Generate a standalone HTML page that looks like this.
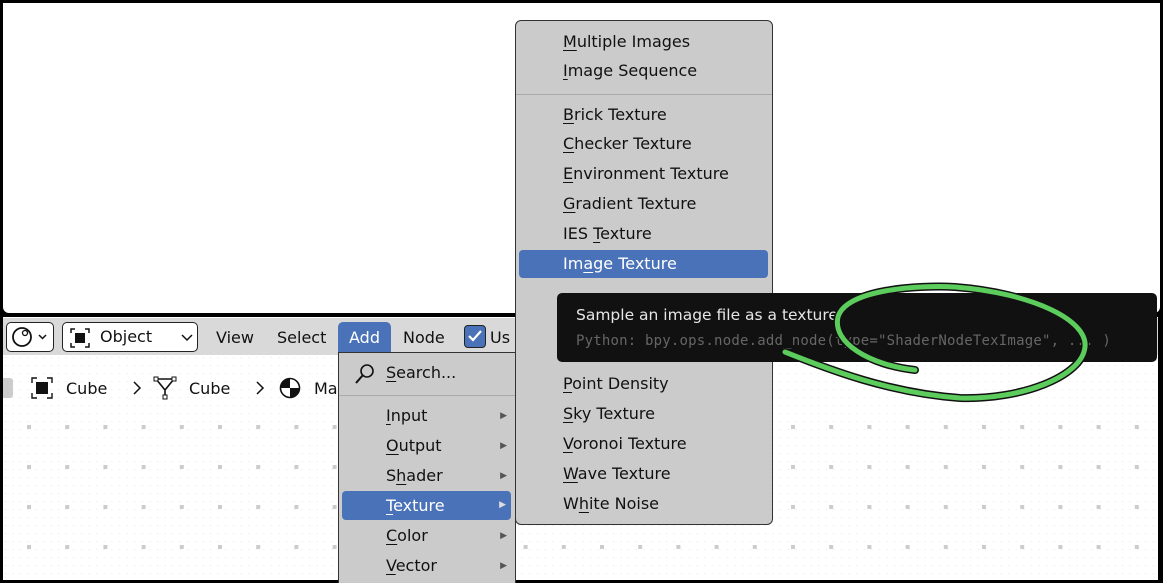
<!DOCTYPE html><html><head><style>
*{margin:0;padding:0;box-sizing:border-box}
html,body{width:1163px;height:583px;overflow:hidden}
body{background:#000;position:relative;font-family:"DejaVu Sans","Liberation Sans",sans-serif;font-size:16px;color:#111}
.abs{position:absolute}
#top{left:3px;top:3px;width:1157px;height:310px;background:#fff;border-radius:0 0 6px 6px}
#bot{left:3px;top:317px;width:1155px;height:263px;background:#fff}
#hdr{left:3px;top:318px;width:1155px;height:37px;background:#d9d9d9}
.btn{border:1.5px solid #222;border-radius:5px;background:#fff;height:30px;top:322px}
.menu{background:#cbcbcb;border:1px solid #333;border-radius:6px;overflow:hidden}
.it{position:absolute;left:0;width:100%;height:30px;line-height:30px}
.hl{background:#4a72b8;color:#fff;border-radius:4px}
.u{text-decoration:underline;text-decoration-thickness:1px;text-underline-offset:3px}
.arr{position:absolute;right:8px;font-size:9px;color:#555}
</style></head><body>
<div id="top" class="abs"></div>
<div id="bot" class="abs"></div>
<svg class="abs" style="left:3px;top:355px" width="1155" height="225">
<defs><pattern id="p" x="24" y="-1" width="38.2" height="40" patternUnits="userSpaceOnUse"><rect x="0" y="71" width="4" height="4" fill="#ccc"/><rect x="0" y="31" width="4" height="4" fill="#ccc"/></pattern>
<pattern id="q" width="7.6" height="8" patternUnits="userSpaceOnUse"><rect x="2" y="2" width="1" height="1" fill="#e6e6e6"/></pattern></defs>
<rect width="1155" height="225" fill="url(#q)"/>
<rect y="40" width="1155" height="185" fill="url(#p)"/>
</svg>
<div id="hdr" class="abs"></div>
<div class="abs btn" style="left:6px;width:48px"><svg width="46" height="28"><circle cx="15" cy="14" r="9" fill="none" stroke="#111" stroke-width="1.8"/><circle cx="18" cy="10" r="2.5" fill="none" stroke="#111" stroke-width="1.3"/><path d="M32 12l3.5 3.5 3.5-3.5" fill="none" stroke="#111" stroke-width="1.5"/></svg></div>
<div class="abs btn" style="left:62px;width:136px"><svg class="abs" style="left:7px;top:5px" width="20" height="20"><path d="M1 5V1h4M15 1h4v4M19 15v4h-4M5 19H1v-4" fill="none" stroke="#111" stroke-width="1.5"/><rect x="5" y="5" width="10" height="10" fill="#111"/></svg><span class="abs" style="left:37px;top:4px">Object</span><svg class="abs" style="left:118px;top:10px" width="12" height="10"><path d="M1 2l5 5 5-5" fill="none" stroke="#111" stroke-width="1.5"/></svg></div>
<span class="abs" style="left:216px;top:328px">View</span>
<span class="abs" style="left:277px;top:328px">Select</span>
<div class="abs hl" style="left:338px;top:322px;width:53px;height:32px;border-radius:5px 5px 0 0;color:#fff;padding:6px 0 0 11px">Add</div>
<span class="abs" style="left:403px;top:328px">Node</span>
<div class="abs" style="left:464px;top:325px;width:22px;height:23px;background:#4a72b8;border:1.5px solid #222;border-radius:4px"><svg width="20" height="20"><path d="M4 10l4 4 8-9" fill="none" stroke="#fff" stroke-width="2.2"/></svg></div>
<span class="abs" style="left:490px;top:328px">Us</span>
<div class="abs" style="left:3px;top:378px;width:10px;height:20px;background:#ccc;border-radius:0 3px 3px 0"></div>
<svg class="abs" style="left:31px;top:377px" width="22" height="22"><path d="M1 6V1h5M16 1h5v5M21 16v5h-5M6 21H1v-5" fill="none" stroke="#111" stroke-width="1.4"/><rect x="5" y="5" width="12" height="12" fill="#111"/></svg>
<span class="abs" style="left:66px;top:379px">Cube</span>
<svg class="abs" style="left:132px;top:381px" width="10" height="14"><path d="M2 1l6 6-6 6" fill="none" stroke="#111" stroke-width="1.5"/></svg>
<svg class="abs" style="left:153px;top:376px" width="24" height="24"><path d="M3 3h18L12 14v8M3 3l9 11M21 3l-9 11" fill="none" stroke="#111" stroke-width="1.6"/><rect x="1" y="1" width="4" height="4" fill="#fff" stroke="#111"/><rect x="19" y="1" width="4" height="4" fill="#fff" stroke="#111"/><rect x="10" y="19" width="4" height="4" fill="#fff" stroke="#111"/></svg>
<span class="abs" style="left:189px;top:379px">Cube</span>
<svg class="abs" style="left:255px;top:381px" width="10" height="14"><path d="M2 1l6 6-6 6" fill="none" stroke="#111" stroke-width="1.5"/></svg>
<svg class="abs" style="left:279px;top:377px" width="22" height="22"><circle cx="11" cy="11" r="9.5" fill="#fff" stroke="#111" stroke-width="1.6"/><path d="M11 1.5A9.5 9.5 0 0 0 1.5 11H11z M11 11h9.5A9.5 9.5 0 0 1 11 20.5z" fill="#111"/></svg>
<span class="abs" style="left:314px;top:379px">Ma</span>

<div class="abs menu" style="left:338px;top:352px;width:178px;height:231px;border-radius:0;border-bottom:none">
<svg class="abs" style="left:15px;top:10px" width="22" height="22"><circle cx="13" cy="8" r="6" fill="none" stroke="#111" stroke-width="1.6"/><path d="M9 12L2 20" stroke="#111" stroke-width="2"/></svg>
<div class="it" style="top:5px;padding-left:47px"><span class="u">S</span>earch...</div>
<div class="abs" style="left:0;top:42px;width:176px;height:1px;background:#aaa"></div>
<div class="it" style="top:48px;padding-left:47px"><span class="u">I</span>nput<span class="arr">▶</span></div>
<div class="it" style="top:78px;padding-left:47px"><span class="u">O</span>utput<span class="arr">▶</span></div>
<div class="it" style="top:108px;padding-left:47px">S<span class="u">h</span>ader<span class="arr">▶</span></div>
<div class="it hl" style="top:138px;left:3px;width:169px;height:29px;padding-left:44px;line-height:29px"><span class="u">T</span>exture<span class="arr" style="right:5px;color:#ddd">▶</span></div>
<div class="it" style="top:168px;padding-left:47px"><span class="u">C</span>olor<span class="arr">▶</span></div>
<div class="it" style="top:198px;padding-left:47px"><span class="u">V</span>ector<span class="arr">▶</span></div>
</div>

<div class="abs menu" style="left:515px;top:20px;width:258px;height:505px">
<div class="it" style="top:6px;padding-left:47px"><span class="u">M</span>ultiple Images</div>
<div class="it" style="top:35px;padding-left:47px"><span class="u">I</span>mage Sequence</div>
<div class="abs" style="left:0;top:73px;width:256px;height:1px;background:#aaa"></div>
<div class="it" style="top:79px;padding-left:47px"><span class="u">B</span>rick Texture</div>
<div class="it" style="top:108px;padding-left:47px"><span class="u">C</span>hecker Texture</div>
<div class="it" style="top:138px;padding-left:47px"><span class="u">E</span>nvironment Texture</div>
<div class="it" style="top:168px;padding-left:47px"><span class="u">G</span>radient Texture</div>
<div class="it" style="top:198px;padding-left:47px">IES <span class="u">T</span>exture</div>
<div class="it hl" style="top:229px;left:3px;width:249px;height:28px;line-height:28px;padding-left:44px">Im<span class="u">a</span>ge Texture</div>
<div class="it" style="top:348px;padding-left:47px"><span class="u">P</span>oint Density</div>
<div class="it" style="top:378px;padding-left:47px"><span class="u">S</span>ky Texture</div>
<div class="it" style="top:408px;padding-left:47px"><span class="u">V</span>oronoi Texture</div>
<div class="it" style="top:438px;padding-left:47px"><span class="u">W</span>ave Texture</div>
<div class="it" style="top:468px;padding-left:47px">W<span class="u">h</span>ite Noise</div>
</div>

<div class="abs" style="left:557px;top:293px;width:600px;height:69px;background:#111;border-radius:5px">
<div class="abs" style="left:19px;top:13px;color:#e6e6e6;font-size:15.5px">Sample an image file as a texture.</div>
<div class="abs" style="left:19px;top:40px;color:#666;font-family:'DejaVu Sans Mono','Liberation Mono',monospace;font-size:14px;letter-spacing:0.2px">Python: bpy.ops.node.add_node(type="ShaderNodeTexImage", ... )</div>
</div>
<svg class="abs" style="left:770px;top:275px" width="330" height="135">
<g fill="none" stroke-linecap="round">
<path d="M145 95C100 90 62 68 68 42C76 14 150 10 185 12C262 18 318 45 315 72C312 102 250 125 190 123C120 118 60 95 15 77" stroke="#111" stroke-width="8"/>
<path d="M145 95C100 90 62 68 68 42C76 14 150 10 185 12C262 18 318 45 315 72C312 102 250 125 190 123C120 118 60 95 15 77" stroke="#5ccc5c" stroke-width="5"/>
</g>
</svg>
</body></html>
